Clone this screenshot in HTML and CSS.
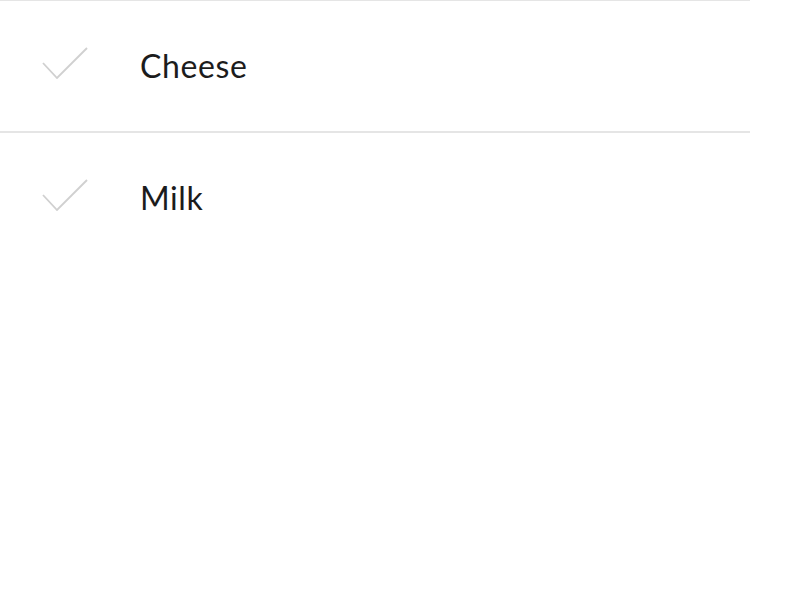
FILE: index.html
```html
<!DOCTYPE html>
<html>
<head>
<meta charset="utf-8">
<link rel="stylesheet" href="styles.css">
</head>
<body>
<ul class="list">
  <li class="item">
    <svg class="check" width="46" height="32" viewBox="0 0 46 32"><polyline points="1,16 15,31 45,1" fill="none" stroke="#d0d0d0" stroke-width="1.8"/></svg>
    <span class="label">Cheese</span>
  </li>
  <li class="item">
    <svg class="check" width="46" height="32" viewBox="0 0 46 32"><polyline points="1,16 15,31 45,1" fill="none" stroke="#d0d0d0" stroke-width="1.8"/></svg>
    <span class="label">Milk</span>
  </li>
</ul>
</body>
</html>
```
FILE: styles.css
```css
html, body {
  margin: 0;
  padding: 0;
  background: #fff;
}
.list {
  list-style: none;
  margin: 0;
  padding: 0;
  width: 750px;
}
.item {
  display: flex;
  align-items: center;
  height: 130px;
  border-top: 1px solid #e5e5e5;
  padding-left: 42px;
}
.item + .item {
  border-top-width: 2px;
}
.check {
  flex: none;
  margin-bottom: 6px;
}
.label {
  margin-left: 52px;
  font-family: Lato, "Open Sans", sans-serif;
  font-size: 32px;
  letter-spacing: 0.6px;
  color: #1c1c1c;
  margin-bottom: 2px;
}
```
